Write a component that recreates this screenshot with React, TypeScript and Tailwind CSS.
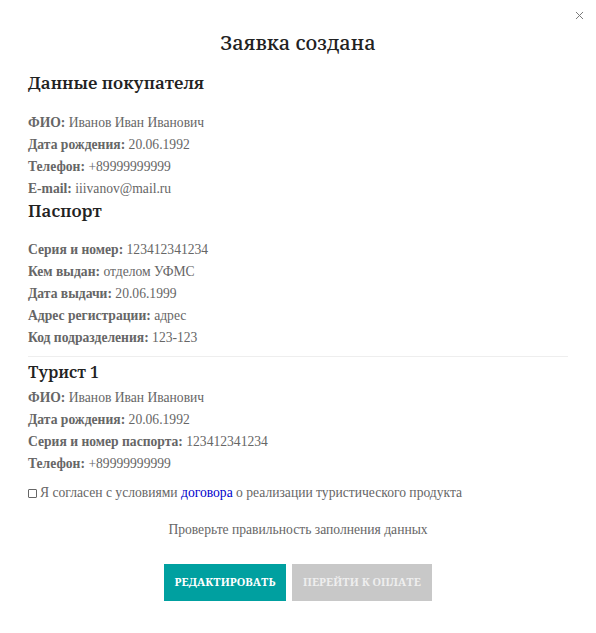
import { X } from "lucide-react";

const serif = "font-['Noto_Serif','DejaVu_Serif',serif]";

const Row = ({ label, value }: { label: string; value: string }) => (
  <p className="h-[22px] leading-[22px]">
    <b className="font-bold">{label}:</b> {value}
  </p>
);

export default function App() {
  return (
    <div className="relative w-[596px] h-[633px] bg-white text-[#666] font-['Liberation_Serif',serif] text-[13.6px]">
      <button className="absolute right-[10px] top-[9px] text-[#777]">
        <X size={13} strokeWidth={1.8} />
      </button>
      <div className="px-[28px] pt-[30px]">
        <h2 className={`${serif} text-center text-[20px] leading-[26px] text-[#222] font-medium`}>
          Заявка создана
        </h2>

        <h3 className={`${serif} mt-[14px] text-[17px] leading-[26px] text-[#222] font-semibold`}>
          Данные покупателя
        </h3>
        <div className="mt-[16px]">
          <Row label="ФИО" value="Иванов Иван Иванович" />
          <Row label="Дата рождения" value="20.06.1992" />
          <Row label="Телефон" value="+89999999999" />
          <Row label="E-mail" value="iiivanov@mail.ru" />
        </div>

        <h3 className={`${serif} -mt-[2px] text-[17px] leading-[26px] text-[#222] font-semibold`}>Паспорт</h3>
        <div className="mt-[15px]">
          <Row label="Серия и номер" value="123412341234" />
          <Row label="Кем выдан" value="отделом УФМС" />
          <Row label="Дата выдачи" value="20.06.1999" />
          <Row label="Адрес регистрации" value="адрес" />
          <Row label="Код подразделения" value="123-123" />
        </div>

        <hr className="mt-[7px] border-t border-[#eee]" />

        <h3 className={`${serif} mt-[3px] text-[16px] leading-[24px] text-[#222] font-semibold`}>Турист 1</h3>
        <div className="mt-[3px]">
          <Row label="ФИО" value="Иванов Иван Иванович" />
          <Row label="Дата рождения" value="20.06.1992" />
          <Row label="Серия и номер паспорта" value="123412341234" />
          <Row label="Телефон" value="+89999999999" />
        </div>

        <label className="mt-[7px] flex items-center gap-[3px] h-[22px]">
          <span className="inline-block w-[9px] h-[9px] border border-[#666] rounded-[1px]" />
          <span>
            Я согласен с условиями <a className="text-[#00c]">договора</a> о реализации туристического продукта
          </span>
        </label>

        <p className="mt-[15px] text-center leading-[22px]">Проверьте правильность заполнения данных</p>

        <div className="mt-[23px] flex justify-center gap-[6px]">
          <button className={`${serif} h-[37px] w-[122px] bg-[#00a0a0] text-white text-[11px] font-bold uppercase`}>
            Редактировать
          </button>
          <button className={`${serif} h-[37px] w-[140px] bg-[#c8c8c8] text-[#eee] text-[11px] font-bold uppercase`}>
            Перейти к оплате
          </button>
        </div>
      </div>
    </div>
  );
}
